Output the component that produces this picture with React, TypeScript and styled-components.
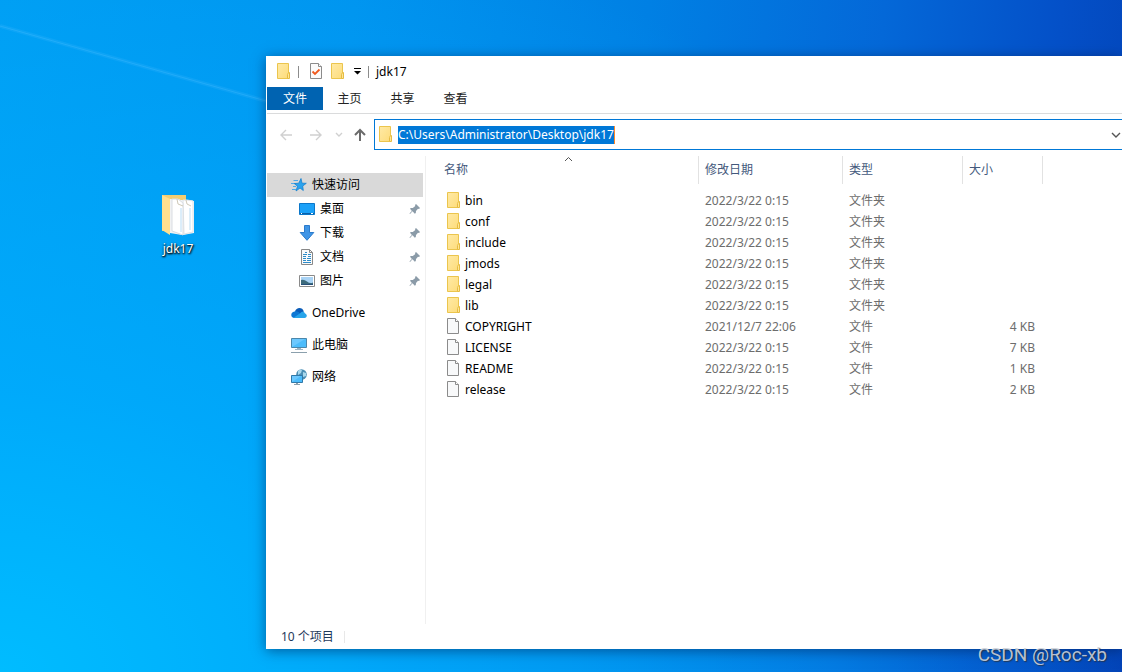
import React from 'react';
import styled, { createGlobalStyle } from 'styled-components';

const GlobalStyle = createGlobalStyle`
  *, *::before, *::after { box-sizing: border-box; }
  body { margin: 0; font-family: 'Noto Sans', 'Noto Sans CJK SC', sans-serif; font-size: 12px; line-height: 18px; color: #000; }
  button { font: inherit; border: 0; background: none; padding: 0; margin: 0; color: inherit; }
  svg { display: block; flex: none; }
`;

const Desktop = styled.main`
  position: relative;
  min-height: 100vh;
  overflow: hidden;
  background:
    radial-gradient(ellipse 100% 120% at 0% 100%, rgba(0, 188, 255, 1), rgba(0, 176, 255, 0.7) 35%, rgba(0, 150, 250, 0) 100%),
    linear-gradient(95deg, #009cf2 0%, #0092ee 30%, #0080e4 55%, #0468d8 75%, #0450c8 90%, #0344b8 100%);
`;

const LightRay = styled.svg`
  position: absolute;
  left: 0;
  top: 0;
`;

const Shortcut = styled.a`
  position: absolute;
  left: 140px;
  top: 192px;
  width: 76px;
  display: flex;
  flex-direction: column;
  align-items: center;
  gap: 2px;
  color: #fff;
  text-decoration: none;
  text-shadow: 1px 1px 2px #000, 0 1px 2px #000;
`;

const Window = styled.section`
  position: absolute;
  left: 266px;
  right: 0;
  top: 56px;
  bottom: 23px;
  padding-left: 1px;
  display: flex;
  flex-direction: column;
  background: #fff;
  box-shadow: 0 2px 12px rgba(0, 30, 80, 0.55);
`;

const TitleBar = styled.header`
  display: flex;
  align-items: center;
  height: 31px;
  padding-left: 10px;
  gap: 7px;
`;

const QuickTools = styled.div`
  display: flex;
  align-items: center;
  gap: 8px;
  padding-left: 4px;
`;

const Title = styled.h1`
  margin: 0;
  font-size: 12px;
  font-weight: 400;
`;

const Divider = styled.span`
  width: 1px;
  height: 12px;
  background: #8c8c8c;
`;

const Tabs = styled.nav`
  display: flex;
  height: 27px;
  padding-bottom: 3px;
  border-bottom: 1px solid #dadbdc;
`;

const Tab = styled.button<{ $primary?: boolean }>`
  width: ${p => (p.$primary ? 56 : 53)}px;
  background: ${p => (p.$primary ? '#0063b1' : 'transparent')};
  color: ${p => (p.$primary ? '#fff' : '#222')};
`;

const AddressRow = styled.div`
  display: flex;
  align-items: center;
  padding-top: 5px;
`;

const NavButtons = styled.div`
  display: flex;
  align-items: center;
  width: 107px;
  padding-left: 12px;
`;

const NavButton = styled.button<{ $width: number }>`
  width: ${p => p.$width}px;
  height: 14px;
`;

const AddressBox = styled.div`
  flex: 1;
  display: flex;
  align-items: center;
  height: 31px;
  padding-left: 4px;
  gap: 5px;
  border: 1px solid #0078d7;
  border-right: 0;
`;

const AddressInput = styled.input`
  field-sizing: content;
  height: 18px;
  padding: 0;
  border: 0;
  border-right: 1px solid #ff8728;
  outline: 0;
  background: #0078d7;
  color: #fff;
  font: inherit;
`;

const DropButton = styled.button`
  margin-left: auto;
  height: 14px;
`;

const Body = styled.div`
  flex: 1;
  display: flex;
  min-height: 0;
  padding-top: 6px;
`;

const Sidebar = styled.nav`
  width: 159px;
  padding-top: 17px;
  padding-right: 2px;
  border-right: 1px solid #f0f0f0;
`;

const NavList = styled.ul`
  list-style: none;
  margin: 0;
  padding: 0;
`;

const NavItem = styled.li<{ $level: number; $active?: boolean; $spaced?: boolean }>`
  display: flex;
  align-items: center;
  gap: 5px;
  height: 24px;
  margin-top: ${p => (p.$spaced ? 8 : 0)}px;
  padding-left: ${p => (p.$level === 2 ? 32 : 24)}px;
  padding-right: 2px;
  background: ${p => (p.$active ? '#d9d9d9' : 'transparent')};
`;

const NavLink = styled.a`
  flex: 1;
  color: #000;
  text-decoration: none;
`;

const Content = styled.div`
  flex: 1;
  min-width: 0;
  padding-left: 12px;
`;

const FileTable = styled.table`
  table-layout: fixed;
  width: 605px;
  border-collapse: collapse;
`;

const Col = styled.col<{ $width: number }>`
  width: ${p => p.$width}px;
`;

const HeadCell = styled.th`
  position: relative;
  height: 34px;
  padding: 0 0 6px;
  font-weight: 400;
  text-align: left;
  color: #44597c;
`;

const HeadLabel = styled.div<{ $left?: boolean; $right?: boolean }>`
  display: flex;
  align-items: center;
  height: 28px;
  padding-left: 6px;
  border-left: ${p => (p.$left ? '1px solid #e2e2e2' : '0')};
  border-right: ${p => (p.$right ? '1px solid #e2e2e2' : '0')};
`;

const SortMark = styled.svg`
  position: absolute;
  top: 0;
  left: 126px;
`;

const Cell = styled.td`
  height: 21px;
  padding: 0 8px 0 7px;
  color: #6d6d6d;
`;

const SizeCell = styled(Cell)`
  text-align: right;
`;

const NameCell = styled(Cell)`
  color: #000;
`;

const FileName = styled.div`
  display: flex;
  align-items: center;
  gap: 4px;
  padding-left: 2px;
`;

const StatusBar = styled.footer`
  display: flex;
  align-items: center;
  gap: 10px;
  height: 25px;
  padding-left: 14px;
  color: #1e395b;
`;

const StatusDivider = styled(Divider)`
  background: #e8e8e8;
`;

const Watermark = styled.div`
  position: absolute;
  right: 15px;
  bottom: 5px;
  font-family: Roboto, sans-serif;
  font-size: 19px;
  line-height: 24px;
  color: rgba(205, 210, 218, 0.9);
  text-shadow: 1px 1px 1px rgba(40, 50, 60, 0.8);
`;

const FolderIcon = () => (
  <svg width="14" height="17" viewBox="0 0 14 17">
    <defs>
      <linearGradient id="folder" x1="0" y1="0" x2="1" y2="1">
        <stop offset="0" stopColor="#ffeaa6" />
        <stop offset="1" stopColor="#fddc7b" />
      </linearGradient>
    </defs>
    <path d="M.5.5h11v15H.5z" fill="url(#folder)" stroke="#ebc54d" />
    <path d="M10.500 15.500v-4l1-2h1v6z" fill="#ffe696" stroke="#e6bc42" />
  </svg>
);

const FileIcon = () => (
  <svg width="14" height="17" viewBox="0 0 14 17">
    <path d="M.5.5h8l3 3v12H.5z" fill="#f8f9fa" stroke="#8b8b8b" />
    <path d="M8.500.5v3h3" fill="#fff" stroke="#8b8b8b" />
  </svg>
);

const CheckFileIcon = () => (
  <svg width="13" height="17" viewBox="0 0 13 17">
    <path d="M.5.5h8l3 3v12H.5z" fill="#fbfbfb" stroke="#8b8b8b" />
    <path d="M8.500.5v3h3" fill="#fff" stroke="#8b8b8b" />
    <path d="M2.500 8.500L5 11l4.500-4.500" fill="none" stroke="#f05a1e" strokeWidth="1.800" />
  </svg>
);

const MenuMark = () => (
  <svg width="8" height="7" viewBox="0 0 8 7">
    <path d="M1 0h7v1H1zM1 3h7L4.500 6.500z" fill="#000" />
  </svg>
);

const Arrow = ({ d, color, w = 14, bold = false }: { d: string; color: string; w?: number; bold?: boolean }) => (
  <svg width={w} height="14" viewBox={`0 0 ${w} 14`}>
    <path d={d} fill="none" stroke={color} strokeWidth={bold ? 2 : 1.400} />
  </svg>
);

const StarIcon = () => (
  <svg width="16" height="16" viewBox="0 0 16 16">
    <path d="M2.500 3.500H7M0 6.500h5M2 9.500h3M1 12.500h4" stroke="#4fa9e8" />
    <path d="M10 1.500l1 4.700 4.300.1-3.600 2.700.6 4.500-3.300-2.500-4 3 1.500-4.800L3.300 6.600l4.500-.4z" fill="#2aa3ee" stroke="#1681cf" strokeWidth=".8" />
  </svg>
);

const DesktopIcon = () => (
  <svg width="16" height="16" viewBox="0 0 16 16">
    <path d="M.5 2.500h15v11H.5z" fill="#1ba1f8" stroke="#0b77c9" />
    <path d="M1 12.500h14" stroke="#0a5fa8" />
    <path d="M2 12.500h1M12 12.500h2" stroke="#fff" />
  </svg>
);

const DownloadIcon = () => (
  <svg width="16" height="16" viewBox="0 0 16 16">
    <path d="M5.500.5h5v7h4.300L8 15.300 1.200 7.500h4.300z" fill="#3f95e6" stroke="#2b7bcc" />
  </svg>
);

const DocumentIcon = () => (
  <svg width="16" height="16" viewBox="0 0 16 16">
    <path d="M2.500.5h8l3 3v12h-11z" fill="#fafafa" stroke="#888" />
    <path d="M10.500.5v3h3" fill="none" stroke="#888" />
    <path d="M6 3.500h2M4 5.500h4M9 5.500h3M4 7.500h3M9 7.500h3M4 9.500h3M8 9.500h4M4 11.500h3M8 11.500h4M4 13.500h8" stroke="#2e8bc8" />
  </svg>
);

const PictureIcon = () => (
  <svg width="16" height="16" viewBox="0 0 16 16">
    <path d="M.5 2.500h15v11H.5z" fill="#fff" stroke="#8a8a8a" />
    <path d="M2 4h12v8H2z" fill="#a9d3f5" />
    <path d="M2 7q3-1 6 1.500t6 1V12H2z" fill="#3c6a7c" />
    <path d="M2 11h12v1H2z" fill="#274f78" />
  </svg>
);

const CloudIcon = () => (
  <svg width="16" height="16" viewBox="0 0 16 16">
    <path d="M4 6.500C5 2 11.500 1.500 12.800 6.500L8 10z" fill="#0a5cb8" />
    <path d="M3.500 13C-.8 13-.8 7 3.500 6.500c2-.8 4 .2 5 1.500L12 13z" fill="#0f78d4" />
    <path d="M2.500 12.800L9.500 8c1.200-2 4-1.500 4.500.5 2.500.7 2.400 4.500-.5 4.500H4z" fill="#27a4ea" />
  </svg>
);

const ComputerIcon = () => (
  <svg width="16" height="16" viewBox="0 0 16 16">
    <path d="M.5 1.500h15v9H.5z" fill="#4cbcfb" stroke="#4b87ab" />
    <path d="M1 10V2h13z" fill="#6cc8fe" />
    <path d="M6 11h4v1H6zM4 12h8v1H4z" fill="#9db5c4" />
    <path d="M0 15.500h16" stroke="#8ba0ad" />
  </svg>
);

const NetworkIcon = () => (
  <svg width="16" height="16" viewBox="0 0 16 16">
    <circle cx="10.500" cy="5.500" r="5.300" fill="#4b8fb5" />
    <path d="M7 2q2-2 4-1l-1 3-3 2zM12 3l3 1v3l-3 1z" fill="#a9d8ec" />
    <path d="M.5 6.500h11v7H.5z" fill="#4cbcfb" stroke="#3179a8" />
    <path d="M1 13V7h9z" fill="#6cc8fe" />
    <path d="M5 14h2v1h2v1H3v-1h2z" fill="#8ba0ad" />
  </svg>
);

const PinIcon = () => (
  <svg width="12" height="12" viewBox="0 0 12 12">
    <path d="M7 1l4 4-1 1-1-.3L7 8l-.2 2-1 .7-2.300-2.400L1 11l-.5-.5 2.400-2.600L1 5.800 1.800 5l2 .1L6.300 3 6 2z" fill="#8b9ba8" />
  </svg>
);

const BigFolderIcon = () => (
  <svg width="34" height="46" viewBox="0 0 34 46">
    <path d="M1 3h24v36H1z" fill="#f3cd72" />
    <path d="M20 8h8l5 1v32l-11 2z" fill="#f4f6f8" />
    <path d="M22 8h4l6 1v31l-9 2z" fill="#fff" stroke="#dfe3e7" />
    <path d="M9 7h9l3 2v34l-12-2z" fill="#f1f2f3" />
    <path d="M11 7h6l5 4v32l-11-4z" fill="#fff" stroke="#d9dde2" />
    <path d="M20 16v24M29 16v22" stroke="#b9dcf5" />
    <path d="M16 7l1 5 5 2M25 8l1 4 4 2" fill="none" stroke="#cfc9b8" />
    <path d="M1 3l8 4v36l-8-5z" fill="#ffdf8e" />
  </svg>
);

const quickLinks = [
  { label: '桌面', icon: <DesktopIcon /> },
  { label: '下载', icon: <DownloadIcon /> },
  { label: '文档', icon: <DocumentIcon /> },
  { label: '图片', icon: <PictureIcon /> },
];

const places = [
  { label: 'OneDrive', icon: <CloudIcon /> },
  { label: '此电脑', icon: <ComputerIcon /> },
  { label: '网络', icon: <NetworkIcon /> },
];

const files = [
  ...['bin', 'conf', 'include', 'jmods', 'legal', 'lib'].map(name => ({ name, date: '2022/3/22 0:15', type: '文件夹', size: '' })),
  { name: 'COPYRIGHT', date: '2021/12/7 22:06', type: '文件', size: '4 KB' },
  { name: 'LICENSE', date: '2022/3/22 0:15', type: '文件', size: '7 KB' },
  { name: 'README', date: '2022/3/22 0:15', type: '文件', size: '1 KB' },
  { name: 'release', date: '2022/3/22 0:15', type: '文件', size: '2 KB' },
];

export default function App() {
  return (
    <Desktop lang="zh-CN">
      <GlobalStyle />
      <LightRay width="266" height="110" viewBox="0 0 266 110">
        <path d="M0 26L266 101" stroke="#3fb8ff" strokeOpacity="0.2" strokeWidth="4" />
        <path d="M0 26L266 101" stroke="#4fc0ff" strokeOpacity="0.3" />
      </LightRay>
      <Shortcut href="#jdk17">
        <BigFolderIcon />
        jdk17
      </Shortcut>
      <Window>
        <TitleBar>
          <FolderIcon />
          <Divider />
          <QuickTools>
            <CheckFileIcon />
            <FolderIcon />
            <MenuMark />
          </QuickTools>
          <Divider />
          <Title>jdk17</Title>
        </TitleBar>
        <Tabs>
          <Tab $primary>文件</Tab>
          <Tab>主页</Tab>
          <Tab>共享</Tab>
          <Tab>查看</Tab>
        </Tabs>
        <AddressRow>
          <NavButtons>
            <NavButton $width={30} aria-label="后退"><Arrow color="#d0d0d0" d="M13 7H2M7 2L2 7l5 5" /></NavButton>
            <NavButton $width={26} aria-label="前进"><Arrow color="#d0d0d0" d="M1 7h11M7 2l5 5-5 5" /></NavButton>
            <NavButton $width={18} aria-label="最近位置"><Arrow w={8} color="#d0d0d0" d="M1 5l3 3 3-3" /></NavButton>
            <NavButton $width={14} aria-label="向上"><Arrow bold color="#6b6b6b" d="M7 13V2M2 7l5-5 5 5" /></NavButton>
          </NavButtons>
          <AddressBox>
            <FolderIcon />
            <AddressInput aria-label="地址" defaultValue="C:\Users\Administrator\Desktop\jdk17" />
            <DropButton aria-label="展开"><Arrow w={12} color="#555" d="M2 5l4 4 4-4" /></DropButton>
          </AddressBox>
        </AddressRow>
        <Body>
          <Sidebar>
            <NavList>
              <NavItem $level={1} $active>
                <StarIcon />
                <NavLink href="#quick">快速访问</NavLink>
              </NavItem>
              {quickLinks.map(q => (
                <NavItem key={q.label} $level={2}>
                  {q.icon}
                  <NavLink href="#folder">{q.label}</NavLink>
                  <PinIcon />
                </NavItem>
              ))}
              {places.map(p => (
                <NavItem key={p.label} $level={1} $spaced>
                  {p.icon}
                  <NavLink href="#place">{p.label}</NavLink>
                </NavItem>
              ))}
            </NavList>
          </Sidebar>
          <Content>
            <FileTable>
              <colgroup>
                <Col $width={260} />
                <Col $width={144} />
                <Col $width={120} />
                <Col $width={81} />
              </colgroup>
              <thead>
                <tr>
                  <HeadCell>
                    <SortMark width="9" height="6" viewBox="0 0 9 6">
                      <path d="M1 5l3.500-3.500L8 5" fill="none" stroke="#555" />
                    </SortMark>
                    <HeadLabel>名称</HeadLabel>
                  </HeadCell>
                  <HeadCell><HeadLabel $left>修改日期</HeadLabel></HeadCell>
                  <HeadCell><HeadLabel $left>类型</HeadLabel></HeadCell>
                  <HeadCell><HeadLabel $left $right>大小</HeadLabel></HeadCell>
                </tr>
              </thead>
              <tbody>
                {files.map(f => (
                  <tr key={f.name}>
                    <NameCell>
                      <FileName>{f.size ? <FileIcon /> : <FolderIcon />}{f.name}</FileName>
                    </NameCell>
                    <Cell>{f.date}</Cell>
                    <Cell>{f.type}</Cell>
                    <SizeCell>{f.size}</SizeCell>
                  </tr>
                ))}
              </tbody>
            </FileTable>
          </Content>
        </Body>
        <StatusBar>10 个项目<StatusDivider /></StatusBar>
      </Window>
      <Watermark>CSDN @Roc-xb</Watermark>
    </Desktop>
  );
}
